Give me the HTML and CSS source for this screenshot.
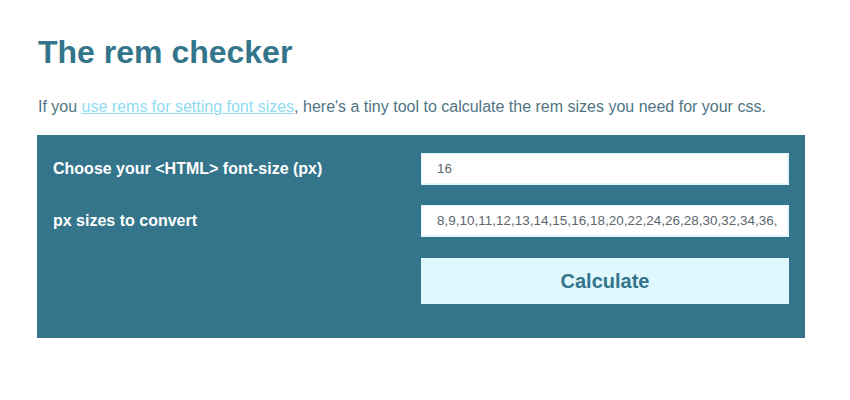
FILE: index.html
```html
<!DOCTYPE html>
<html lang="en">
<head>
<meta charset="utf-8">
<title>The rem checker</title>
<link rel="stylesheet" href="styles.css">
</head>
<body>
<main class="page">
  <h1 class="title">The rem checker</h1>
  <p class="intro">If you <a href="#" class="intro-link">use rems for setting font sizes</a>, here's a tiny tool to calculate the rem sizes you need for your css.</p>
  <form class="panel">
    <label class="label" for="base">Choose your &lt;HTML&gt; font-size (px)</label>
    <input class="field" id="base" type="text" value="16">
    <label class="label" for="sizes">px sizes to convert</label>
    <input class="field" id="sizes" type="text" value="8,9,10,11,12,13,14,15,16,18,20,22,24,26,28,30,32,34,36,">
    <button class="button" type="button">Calculate</button>
  </form>
</main>
</body>
</html>
```

FILE: styles.css
```css
html, body {
  margin: 0;
  padding: 0;
  background: #ffffff;
}

body {
  font-family: "Liberation Sans", Arial, sans-serif;
}

.page {
  width: 768px;
  padding: 0 37px;
}

.title {
  margin: 0;
  padding-top: 33px;
  font-size: 32px;
  line-height: 38px;
  font-weight: bold;
  color: #33758b;
  padding-left: 1px;
}

.intro {
  margin: 0;
  padding-top: 26px;
  padding-left: 1px;
  font-size: 16px;
  line-height: 20px;
  color: #4f7584;
}

.intro-link {
  color: #8fdcf2;
  text-decoration: underline;
}

.panel {
  margin-top: 18px;
  background: #34758b;
  padding: 18px 16px 34px;
  display: grid;
  grid-template-columns: 368px 368px;
  row-gap: 20px;
  align-items: center;
}

.label {
  color: #ffffff;
  font-weight: bold;
  font-size: 16px;
  line-height: 20px;
}

.field {
  box-sizing: border-box;
  width: 368px;
  height: 32px;
  margin: 0;
  border: 1px solid #e2f6fc;
  border-width: 1px 2px 2px 1px;
  background: #ffffff;
  padding: 0 0 0 15px;
  font-family: "Liberation Sans", Arial, sans-serif;
  font-size: 13.4px;
  letter-spacing: 0.05px;
  color: #5b666d;
  outline: none;
}

.button {
  grid-column: 2;
  margin-top: 1px;
  box-sizing: border-box;
  width: 368px;
  height: 46px;
  border: 0;
  background: #e0f7fd;
  color: #33758b;
  font-family: "Liberation Sans", Arial, sans-serif;
  font-size: 20px;
  font-weight: bold;
  cursor: pointer;
}
```
